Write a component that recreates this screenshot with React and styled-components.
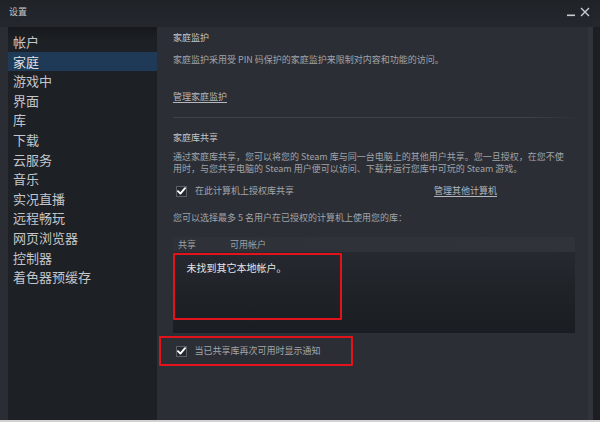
import React from "react";
import styled, { createGlobalStyle } from "styled-components";

const Global = createGlobalStyle`
  html, body { margin: 0; padding: 0; background: #d2d2d2; }
  * { box-sizing: border-box; }
  body { font-family: "Noto Sans CJK SC", "Noto Sans", sans-serif; }
`;

const Window = styled.div`
  width: 600px;
  height: 420px;
  background: #2a2d33;
  display: flex;
  flex-direction: column;
  overflow: hidden;
`;

const TitleBar = styled.div`
  height: 27px;
  flex: none;
  display: flex;
  align-items: center;
  justify-content: space-between;
  padding: 0 9px 3px 9px;
  background: linear-gradient(180deg, #1f2227 0%, #24272d 100%);
`;

const Title = styled.div`
  font-size: 9px;
  color: #c4c7cc;
  line-height: 12px;
`;

const Controls = styled.div`
  display: flex;
  align-items: center;
  gap: 5px;
  margin-right: 1px;
`;

const Body = styled.div`
  flex: 1;
  display: flex;
  padding-left: 8px;
  min-height: 0;
`;

const Sidebar = styled.nav`
  width: 149px;
  flex: none;
  padding-top: 5px;
  background: linear-gradient(180deg, #16181c 0px, #1d2025 14px, #1d2025 100%);
  display: flex;
  flex-direction: column;
`;

const NavItem = styled.div`
  height: 19.6px;
  line-height: 19.6px;
  padding-left: 5px;
  font-size: 13px;
  color: ${(p) => (p.$active ? "#dfe3e8" : "#c3c6cb")};
  background: ${(p) => (p.$active ? "#1f3a56" : "transparent")};
  white-space: nowrap;
`;

const Main = styled.main`
  flex: 1;
  padding: 5px 0 0 16px;
  display: flex;
  flex-direction: column;
  background: #2b2e34;
  border-right: 7px solid #1c1e22;
  box-shadow: inset -5px 0 0 #303339;
`;

const Heading = styled.div`
  font-size: 9px;
  line-height: 12px;
  color: #c3c6cb;
  margin-top: ${(p) => p.$mt || 0}px;
`;

const Text = styled.div`
  font-size: 9px;
  line-height: 12px;
  color: #a0a4aa;
  white-space: nowrap;
  margin-top: ${(p) => p.$mt || 0}px;
`;

const Link = styled.span`
  font-size: 9px;
  line-height: 12px;
  color: #b4b8be;
  text-decoration: underline;
  text-underline-offset: 2px;
  white-space: nowrap;
`;

const LinkRow = styled.div`
  margin-top: ${(p) => p.$mt || 0}px;
  line-height: 12px;
`;

const Separator = styled.div`
  height: 1px;
  margin: 14px 10px 0 0;
  background: linear-gradient(90deg, #40434a 0%, #40434a 85%, rgba(64, 67, 74, 0) 100%);
`;

const CheckRow = styled.div`
  display: flex;
  align-items: center;
  margin-top: ${(p) => p.$mt || 0}px;
  padding-left: 3px;
  height: 14px;
`;

const Box = styled.span`
  width: 11px;
  height: 11px;
  flex: none;
  border: 1px solid #5b5f67;
  background: #25282d;
  display: inline-flex;
  align-items: center;
  justify-content: center;
`;

const CheckLabel = styled.span`
  margin-left: 8px;
  font-size: 9px;
  line-height: 12px;
  color: #a2a6ac;
  white-space: nowrap;
`;

const Spacer = styled.span`
  flex: none;
  width: ${(p) => p.$w}px;
`;

const Table = styled.div`
  margin-top: 13px;
  width: 402px;
  display: flex;
  flex-direction: column;
`;

const TableHead = styled.div`
  height: 15px;
  display: flex;
  align-items: center;
  padding-left: 5px;
  background: linear-gradient(90deg, #2e3137 0%, #30333a 100%);
`;

const HeadCell = styled.span`
  font-size: 9px;
  line-height: 12px;
  color: #9ca0a6;
  width: ${(p) => p.$w}px;
  flex: none;
`;

const List = styled.div`
  height: 81px;
  background: linear-gradient(180deg, #26292f 0%, #1f2227 50%, #1a1d21 100%);
  padding-top: 1px;
`;

const Highlight = styled.div`
  border: 2.5px solid #e3131b;
  border-radius: 1px;
`;

const EmptyBox = styled(Highlight)`
  width: 169px;
  height: 67px;
  padding: 6px 0 0 11.5px;
`;

const EmptyText = styled.div`
  font-size: 10px;
  line-height: 13px;
  color: #e3e5e8;
`;

const NotifyBox = styled(Highlight)`
  width: 194px;
  height: 30px;
  margin: 3px 0 0 -14px;
  display: flex;
  align-items: center;
  padding-left: 14.5px;
`;

const Check = () => (
  <svg width="9" height="8" viewBox="0 0 9 8">
    <path d="M1 4.2 L3.4 6.6 L8 1.2" fill="none" stroke="#ffffff" strokeWidth="1.9" strokeLinecap="round" strokeLinejoin="round" />
  </svg>
);

const Checkbox = () => (
  <Box>
    <Check />
  </Box>
);

const nav = ["帐户", "家庭", "游戏中", "界面", "库", "下载", "云服务", "音乐", "实况直播", "远程畅玩", "网页浏览器", "控制器", "着色器预缓存"];

export default function App() {
  return (
    <>
      <Global />
      <Window>
        <TitleBar>
          <Title>设置</Title>
          <Controls>
            <svg width="8" height="10" viewBox="0 0 8 10">
              <rect x="0" y="7.5" width="8" height="1.6" fill="#c8cbd0" />
            </svg>
            <svg width="10" height="10" viewBox="0 0 10 10">
              <path d="M1 1 L9 9 M9 1 L1 9" stroke="#c8cbd0" strokeWidth="1.4" />
            </svg>
          </Controls>
        </TitleBar>
        <Body>
          <Sidebar>
            {nav.map((n) => (
              <NavItem key={n} $active={n === "家庭"}>{n}</NavItem>
            ))}
          </Sidebar>
          <Main>
            <Heading>家庭监护</Heading>
            <Text $mt={10}>家庭监护采用受 PIN 码保护的家庭监护来限制对内容和功能的访问。</Text>
            <LinkRow $mt={21}><Link>管理家庭监护</Link></LinkRow>
            <Separator />
            <Heading $mt={14}>家庭库共享</Heading>
            <Text $mt={7}>通过家庭库共享，您可以将您的 Steam 库与同一台电脑上的其他用户共享。您一旦授权，在您不使</Text>
            <Text>用时，与您共享电脑的 Steam 用户便可以访问、下载并运行您库中可玩的 Steam 游戏。</Text>
            <CheckRow $mt={9}>
              <Checkbox />
              <CheckLabel>在此计算机上授权库共享</CheckLabel>
              <Spacer $w={140} />
              <Link>管理其他计算机</Link>
            </CheckRow>
            <Text $mt={14}>您可以选择最多 5 名用户在已授权的计算机上使用您的库：</Text>
            <Table>
              <TableHead>
                <HeadCell $w={52}>共享</HeadCell>
                <HeadCell $w={60}>可用帐户</HeadCell>
              </TableHead>
              <List>
                <EmptyBox>
                  <EmptyText>未找到其它本地帐户。</EmptyText>
                </EmptyBox>
              </List>
            </Table>
            <NotifyBox>
              <Checkbox />
              <CheckLabel>当已共享库再次可用时显示通知</CheckLabel>
            </NotifyBox>
          </Main>
        </Body>
      </Window>
    </>
  );
}
